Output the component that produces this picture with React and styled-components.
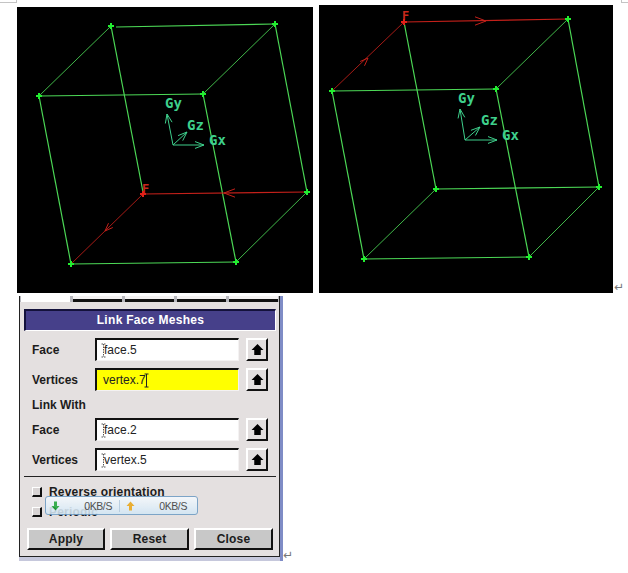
import React from 'react';
import styled, { createGlobalStyle } from 'styled-components';

const GlobalStyle = createGlobalStyle`
  html, body {
    margin: 0;
    background: #fff;
  }
  body {
    font-family: "Liberation Sans", Arial, sans-serif;
  }
`;

const Page = styled.div`
  position: relative;
  box-sizing: border-box;
  width: 628px;
  height: 573px;
  padding: 5px 0 0 17px;
  overflow: hidden;
`;

const CropMark = styled.i`
  position: absolute;
  top: 0;
  height: 2px;
  border-bottom: 1px solid #c4c4c4;
  ${(p) => (p.$right
    ? 'left: 621px; width: 7px; border-left: 1px solid #c4c4c4;'
    : 'left: 0; width: 16px; border-right: 1px solid #c4c4c4;')}
`;

const ViewRow = styled.div`
  display: flex;
  align-items: flex-end;
  gap: 6px;
  height: 288px;
`;

const Viewport = styled.svg`
  display: block;
  flex: none;
  background: #000;
`;

const AxisLabel = styled.text`
  font-family: "DejaVu Sans Mono", monospace;
  font-size: 14px;
  font-weight: 700;
  fill: #3ed08c;
`;

const FaceLabel = styled.text`
  font-family: "DejaVu Sans Mono", monospace;
  font-size: 12px;
  font-weight: 700;
  fill: #c8281c;
`;

const ReturnMark = styled.span`
  flex: none;
  width: 12px;
  margin-left: ${(p) => p.$pull};
  font-family: "DejaVu Sans", sans-serif;
  font-size: 12px;
  line-height: 12px;
  color: #777;
`;

const DialogRow = styled.div`
  display: flex;
  align-items: flex-end;
  margin: 3px 0 0 2px;
`;

const Dialog = styled.div`
  position: relative;
  flex: none;
  box-sizing: border-box;
  width: 264px;
  height: 265px;
  padding-bottom: 4px;
  background: #c6c8dc;
  border-right: 3px solid #7f8cc6;
`;

const Panel = styled.div`
  box-sizing: border-box;
  height: 261px;
  padding: 0 3px 0 4px;
  background: #e4e0e0;
  border: solid #222;
  border-width: 0 1px 1px 1px;
`;

const TabStrip = styled.div`
  display: flex;
  gap: 3px;
  margin: 0 -3px 7px -4px;
  padding: 0 1px;
  height: 6px;
  background: #b8b8be;
`;

const Tab = styled.div`
  flex: 1;
  background: ${(p) => (p.$active ? '#fff' : '#f4f2f2')};
  border-bottom: ${(p) => (p.$active ? '0' : '3px solid #111')};
`;

const TitleBar = styled.div`
  box-sizing: border-box;
  height: 22px;
  margin-bottom: 7px;
  background: #46408a;
  border: solid;
  border-width: 2px 1px 1px 2px;
  border-color: #14123c #fff #fff #14123c;
  color: #fff;
  font-size: 12px;
  font-weight: 700;
  letter-spacing: 0.3px;
  line-height: 18px;
  text-align: center;
`;

const FieldRow = styled.div`
  display: grid;
  grid-template-columns: 56px 144px 22px;
  column-gap: 7px;
  align-items: center;
  height: 23px;
  margin-bottom: 7px;
  padding-left: 8px;
`;

const Label = styled.span`
  font-size: 12px;
  font-weight: 700;
  color: #1c1c1c;
`;

const SectionLabel = styled(Label)`
  display: block;
  height: 20px;
  margin: 7px 0 0 8px;
  line-height: 14px;
`;

const Field = styled.div`
  display: flex;
  align-items: center;
  box-sizing: border-box;
  height: 23px;
  padding-left: ${(p) => (p.$focused ? '6px' : '4px')};
  background: ${(p) => (p.$focused ? '#ffff00' : '#fff')};
  border: solid;
  border-width: 2px 1px 1px 2px;
  border-color: #111 #f4f2f2 #f4f2f2 #111;
  font-size: 12px;
  color: #222;
`;

const ArrowButton = styled.div`
  display: flex;
  align-items: center;
  justify-content: center;
  box-sizing: border-box;
  height: 23px;
  background: #e2dede;
  border: solid;
  border-width: 2px;
  border-color: #fff #111 #111 #fff;
`;

const Divider = styled.div`
  height: 1px;
  margin: -2px 0 9px;
  background: #222;
`;

const CheckRow = styled.div`
  display: flex;
  align-items: center;
  gap: 7px;
  height: 12px;
  margin: 0 0 8px 8px;
  font-size: 12px;
  font-weight: 700;
  letter-spacing: 0.2px;
  color: #1c1c1c;
`;

const CheckBox = styled.span`
  flex: none;
  box-sizing: border-box;
  width: 10px;
  height: 10px;
  background: #d8d4d4;
  border: solid;
  border-width: 1px 2px 2px 1px;
  border-color: #fff #111 #111 #fff;
`;

const ButtonRow = styled.div`
  display: grid;
  grid-template-columns: 78px 79px 79px;
  column-gap: 5px;
  margin: 10px 0 0 3px;
`;

const ActionButton = styled.div`
  box-sizing: border-box;
  height: 22px;
  background: #c8c8c8;
  border: solid;
  border-width: 2px;
  border-color: #fff #111 #111 #fff;
  font-size: 12px;
  font-weight: 700;
  letter-spacing: 0.2px;
  line-height: 18px;
  text-align: center;
  color: #1c1c1c;
`;

const SpeedBadge = styled.div`
  position: absolute;
  left: 26px;
  top: 200px;
  display: grid;
  grid-template-columns: 14px 55px 20px 47px;
  align-items: center;
  box-sizing: border-box;
  width: 153px;
  height: 19px;
  padding: 0 5px;
  background: linear-gradient(#f6fafe, #d2e6f4);
  opacity: 0.88;
  border: 1px solid #6e9cc4;
  border-radius: 3px;
  font-size: 10.5px;
  letter-spacing: -0.4px;
  color: #3a3a3a;
`;

const SpeedValue = styled.span`
  text-align: right;
  padding-right: ${(p) => (p.$first ? '7px' : '0')};
  border-right: ${(p) => (p.$first ? '1px solid #b4cce0' : '0')};
`;

const SpeedIcon = styled.svg`
  display: block;
  margin-left: ${(p) => p.$inset};
`;

const CursorIcon = styled.svg`
  flex: none;
  margin: ${(p) => (p.$solid ? '0 0 0 -2px' : '0 -2px 0 0')};
`;

const GREEN = '#4cd856';
const RED = '#c4201a';
const AXIS = '#3ed08c';

// head of an open arrow whose tip is at x,y and which points along dx,dy
const headPoints = (x, y, dx, dy, size = 9) => {
  const len = Math.hypot(dx, dy);
  const ux = dx / len;
  const uy = dy / len;
  const wing = size * 0.38;
  return [
    [x - ux * size - uy * wing, y - uy * size + ux * wing],
    [x, y],
    [x - ux * size + uy * wing, y - uy * size - ux * wing],
  ].map((p) => p.join(',')).join(' ');
};

// the receding edges of the cube come out thinner in the picture
const edgeWidth = ([x1, y1, x2, y2]) => (
  Math.abs(x2 - x1) > 40 && Math.abs(y2 - y1) > 40 && Math.abs(y2 - y1) < 100 ? 0.85 : 1.2
);

const Marker = ({ x, y, color }) => (
  <g stroke={color} strokeWidth="2">
    <line x1={x - 3} y1={y} x2={x + 3} y2={y} />
    <line x1={x} y1={y - 3} x2={x} y2={y + 3} />
  </g>
);

const views = [
  {
    box: [17, 7, 296, 286],
    green: [
      [116, 27, 275, 24], [111, 26, 39, 96], [39, 96, 203, 94], [275, 24, 203, 94],
      [111, 26, 143, 192], [275, 24, 307, 192], [39, 96, 71, 264], [203, 94, 236, 262],
      [71, 264, 236, 262], [236, 262, 307, 192],
    ],
    red: [[307, 192, 143, 194], [143, 194, 71, 264]],
    redHeads: [[224, 193, -1, 0, 11], [105, 231, -1, 1, 8]],
    greenPoints: [[111, 26], [275, 24], [39, 96], [203, 94], [307, 192], [71, 264], [236, 262]],
    redPoints: [[143, 194]],
    origin: [173, 145],
    tips: { y: [167, 114], z: [187, 132], x: [204, 145] },
    labels: { y: [165, 108], z: [187, 130], x: [209, 145] },
    face: [142, 193],
  },
  {
    box: [319, 5, 294, 288],
    green: [
      [332, 91, 496, 89], [568, 19, 496, 89], [404, 22, 436, 189], [568, 19, 599, 187],
      [332, 91, 364, 259], [496, 89, 529, 257], [436, 189, 599, 187], [436, 189, 364, 259],
      [364, 259, 529, 257], [529, 257, 599, 187],
    ],
    red: [[332, 91, 404, 22], [404, 22, 568, 19]],
    redHeads: [[368, 58, 1, -1, 8], [486, 21, 1, 0, 11]],
    greenPoints: [[568, 19], [332, 91], [496, 89], [436, 189], [599, 187], [364, 259], [529, 257]],
    redPoints: [[404, 22]],
    origin: [465, 140],
    tips: { y: [460, 109], z: [480, 127], x: [497, 140] },
    labels: { y: [458, 103], z: [481, 125], x: [502, 140] },
    face: [402, 20],
  },
];

const CubeView = ({ view }) => {
  const [, , bw, bh] = view.box;
  const [ox, oy] = view.origin;
  return (
    <Viewport width={bw} height={bh} viewBox={view.box.join(' ')}>
      <g stroke={GREEN} fill="none">
        {view.green.map((l) => (
          <line key={l.join()} x1={l[0]} y1={l[1]} x2={l[2]} y2={l[3]} strokeWidth={edgeWidth(l)} />
        ))}
      </g>
      <g stroke={RED} fill="none">
        {view.red.map((l) => (
          <line key={l.join()} x1={l[0]} y1={l[1]} x2={l[2]} y2={l[3]} strokeWidth={edgeWidth(l)} />
        ))}
        {view.redHeads.map((h) => (
          <polyline key={h.join()} points={headPoints(h[0], h[1], h[2], h[3], h[4])} />
        ))}
      </g>
      <g stroke={AXIS} fill="none">
        {Object.values(view.tips).map(([tx, ty]) => (
          <g key={tx}>
            <line x1={ox} y1={oy} x2={tx} y2={ty} />
            <polyline points={headPoints(tx, ty, tx - ox, ty - oy)} />
          </g>
        ))}
      </g>
      <AxisLabel x={view.labels.y[0]} y={view.labels.y[1]}>Gy</AxisLabel>
      <AxisLabel x={view.labels.z[0]} y={view.labels.z[1]}>Gz</AxisLabel>
      <AxisLabel x={view.labels.x[0]} y={view.labels.x[1]}>Gx</AxisLabel>
      <FaceLabel x={view.face[0]} y={view.face[1]}>F</FaceLabel>
      {view.greenPoints.map(([x, y]) => <Marker key={x} x={x} y={y} color="#22ee30" />)}
      {view.redPoints.map(([x, y]) => <Marker key={x} x={x} y={y} color="#e02018" />)}
    </Viewport>
  );
};

const UpArrow = () => (
  <svg width="13" height="13" viewBox="0 0 12 12">
    <path d="M6 1 L11.5 6.5 L9 6.5 L9 11 L3 11 L3 6.5 L0.5 6.5 Z" fill="#000" />
  </svg>
);

// the text cursor left in a field: dotted when idle, solid in the focused one
const TextCursor = ({ solid }) => (
  <CursorIcon $solid={solid} width="5" height="15" viewBox="0 0 5 15">
    <path
      d="M0.5 1 H4.5 M2.5 1 V14 M0.5 14 H4.5"
      stroke={solid ? '#222' : '#555'}
      fill="none"
      strokeDasharray={solid ? 'none' : '1.5 1'}
    />
  </CursorIcon>
);

const SpeedArrow = ({ up, color, inset }) => (
  <SpeedIcon $inset={inset} width="9" height="10" viewBox="0 0 9 10">
    <path
      d={up ? 'M4.5 0.5 L8.5 5 H6 V9.5 H3 V5 H0.5 Z' : 'M4.5 9.5 L8.5 5 H6 V0.5 H3 V5 H0.5 Z'}
      fill={color}
    />
  </SpeedIcon>
);

const rows = [
  { label: 'Face', value: 'face.5' },
  { label: 'Vertices', value: 'vertex.7', focused: true },
  { label: 'Face', value: 'face.2', section: 'Link With' },
  { label: 'Vertices', value: 'vertex.5' },
];

const App = () => (
  <Page>
    <GlobalStyle />
    <CropMark />
    <CropMark $right />
    <ViewRow>
      <CubeView view={views[0]} />
      <CubeView view={views[1]} />
      <ReturnMark $pull="-5px">↵</ReturnMark>
    </ViewRow>
    <DialogRow>
      <Dialog>
        <Panel>
          <TabStrip>
            <Tab $active />
            <Tab />
            <Tab />
            <Tab />
            <Tab />
          </TabStrip>
          <TitleBar>Link Face Meshes</TitleBar>
          {rows.map((row) => (
            <React.Fragment key={row.value}>
              {row.section && <SectionLabel>{row.section}</SectionLabel>}
              <FieldRow>
                <Label>{row.label}</Label>
                <Field $focused={row.focused}>
                  {!row.focused && <TextCursor />}
                  {row.value}
                  {row.focused && <TextCursor solid />}
                </Field>
                <ArrowButton><UpArrow /></ArrowButton>
              </FieldRow>
            </React.Fragment>
          ))}
          <Divider />
          <CheckRow><CheckBox />Reverse orientation</CheckRow>
          <CheckRow><CheckBox />Periodic</CheckRow>
          <ButtonRow>
            <ActionButton>Apply</ActionButton>
            <ActionButton>Reset</ActionButton>
            <ActionButton>Close</ActionButton>
          </ButtonRow>
        </Panel>
        <SpeedBadge>
          <SpeedArrow color="#22a83c" inset="0" />
          <SpeedValue $first>0KB/S</SpeedValue>
          <SpeedArrow up color="#eaa81c" inset="6px" />
          <SpeedValue>0KB/S</SpeedValue>
        </SpeedBadge>
      </Dialog>
      <ReturnMark $pull="0">↵</ReturnMark>
    </DialogRow>
  </Page>
);

export default App;
